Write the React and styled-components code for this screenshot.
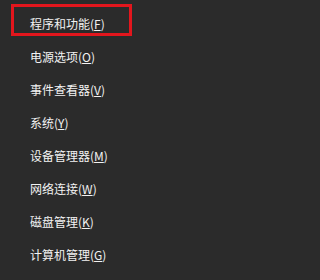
import React from "react";
import styled, { createGlobalStyle } from "styled-components";

const GlobalStyle = createGlobalStyle`
  html, body {
    margin: 0;
    padding: 0;
    background: #2b2b2b;
  }
`;

const Menu = styled.ul`
  list-style: none;
  margin: 0;
  padding: 7px 0 0;
  width: 221px;
  height: 280px;
  box-sizing: border-box;
  overflow: hidden;
  background: #2b2b2b;
  font-family: "Microsoft YaHei", "Noto Sans CJK SC", "Noto Sans", sans-serif;
`;

const Item = styled.li`
  position: relative;
  display: flex;
  align-items: center;
  height: 33px;
  padding-left: 30px;
  font-size: 12px;
  color: #f2f2f2;
  white-space: nowrap;
`;

const Mark = styled.div`
  position: absolute;
  left: 11px;
  top: -3px;
  width: 121px;
  height: 32px;
  box-sizing: border-box;
  border: 3px solid #e3161d;
  pointer-events: none;
`;

const Key = styled.span`
  text-decoration: underline;
  text-underline-offset: 1px;
`;

const items = [
  { label: "程序和功能", key: "F", marked: true },
  { label: "电源选项", key: "O" },
  { label: "事件查看器", key: "V" },
  { label: "系统", key: "Y" },
  { label: "设备管理器", key: "M" },
  { label: "网络连接", key: "W" },
  { label: "磁盘管理", key: "K" },
  { label: "计算机管理", key: "G" },
  { label: "命令提示符", key: "C" },
];

export default function App() {
  return (
    <>
      <GlobalStyle />
      <Menu>
        {items.map((it) => (
          <Item key={it.key}>
            {it.marked && <Mark />}
            {it.label}(<Key>{it.key}</Key>)
          </Item>
        ))}
      </Menu>
    </>
  );
}
